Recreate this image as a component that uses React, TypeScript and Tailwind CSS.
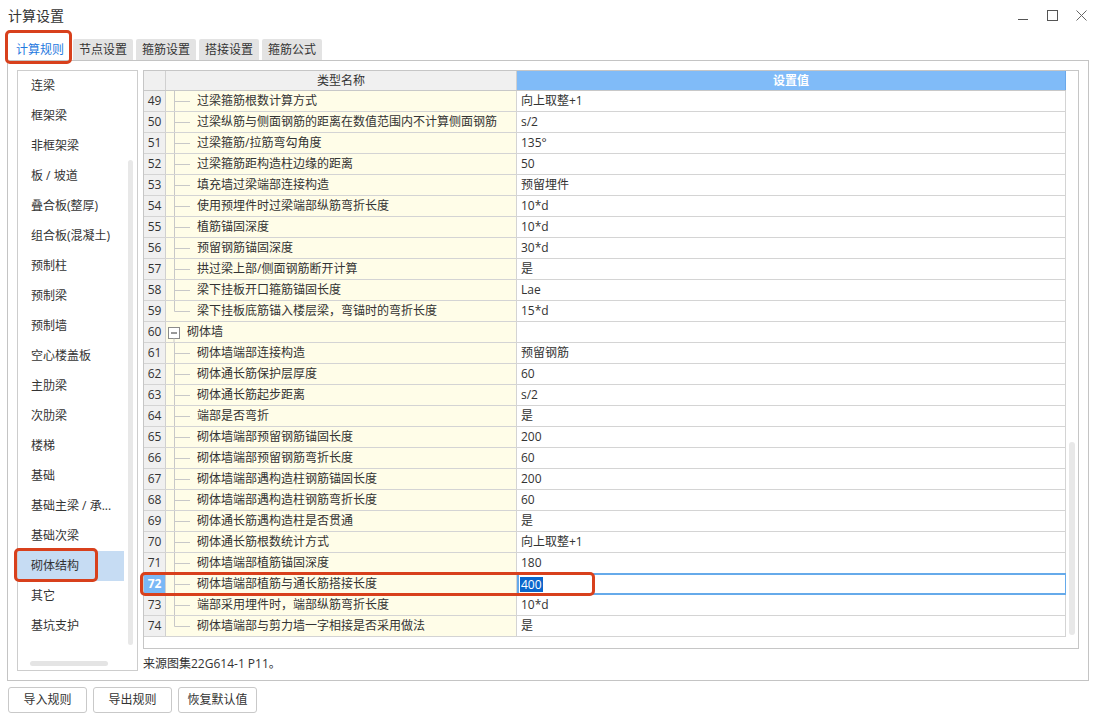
import React from "react";

type Row = { n: number; name: string; value: string; kind: "child" | "last" | "group" };

const rows: Row[] = [
  { n: 49, name: "过梁箍筋根数计算方式", value: "向上取整+1", kind: "child" },
  { n: 50, name: "过梁纵筋与侧面钢筋的距离在数值范围内不计算侧面钢筋", value: "s/2", kind: "child" },
  { n: 51, name: "过梁箍筋/拉筋弯勾角度", value: "135°", kind: "child" },
  { n: 52, name: "过梁箍筋距构造柱边缘的距离", value: "50", kind: "child" },
  { n: 53, name: "填充墙过梁端部连接构造", value: "预留埋件", kind: "child" },
  { n: 54, name: "使用预埋件时过梁端部纵筋弯折长度", value: "10*d", kind: "child" },
  { n: 55, name: "植筋锚固深度", value: "10*d", kind: "child" },
  { n: 56, name: "预留钢筋锚固深度", value: "30*d", kind: "child" },
  { n: 57, name: "拱过梁上部/侧面钢筋断开计算", value: "是", kind: "child" },
  { n: 58, name: "梁下挂板开口箍筋锚固长度", value: "Lae", kind: "child" },
  { n: 59, name: "梁下挂板底筋锚入楼层梁，弯锚时的弯折长度", value: "15*d", kind: "last" },
  { n: 60, name: "砌体墙", value: "", kind: "group" },
  { n: 61, name: "砌体墙端部连接构造", value: "预留钢筋", kind: "child" },
  { n: 62, name: "砌体通长筋保护层厚度", value: "60", kind: "child" },
  { n: 63, name: "砌体通长筋起步距离", value: "s/2", kind: "child" },
  { n: 64, name: "端部是否弯折", value: "是", kind: "child" },
  { n: 65, name: "砌体墙端部预留钢筋锚固长度", value: "200", kind: "child" },
  { n: 66, name: "砌体墙端部预留钢筋弯折长度", value: "60", kind: "child" },
  { n: 67, name: "砌体墙端部遇构造柱钢筋锚固长度", value: "200", kind: "child" },
  { n: 68, name: "砌体墙端部遇构造柱钢筋弯折长度", value: "60", kind: "child" },
  { n: 69, name: "砌体通长筋遇构造柱是否贯通", value: "是", kind: "child" },
  { n: 70, name: "砌体通长筋根数统计方式", value: "向上取整+1", kind: "child" },
  { n: 71, name: "砌体墙端部植筋锚固深度", value: "180", kind: "child" },
  { n: 72, name: "砌体墙端部植筋与通长筋搭接长度", value: "400", kind: "child" },
  { n: 73, name: "端部采用埋件时，端部纵筋弯折长度", value: "10*d", kind: "child" },
  { n: 74, name: "砌体墙端部与剪力墙一字相接是否采用做法", value: "是", kind: "last" },
];

const sideItems = [
  "连梁",
  "框架梁",
  "非框架梁",
  "板 / 坡道",
  "叠合板(整厚)",
  "组合板(混凝土)",
  "预制柱",
  "预制梁",
  "预制墙",
  "空心楼盖板",
  "主肋梁",
  "次肋梁",
  "楼梯",
  "基础",
  "基础主梁 / 承...",
  "基础次梁",
  "砌体结构",
  "其它",
  "基坑支护",
];

const tabs = ["计算规则", "节点设置", "箍筋设置", "搭接设置", "箍筋公式"];

function Tree({ kind }: { kind: Row["kind"] }) {
  if (kind === "group") {
    return (
      <svg width="20" height="20" className="shrink-0">
        <rect x="2.5" y="5.5" width="11" height="11" fill="#fff" stroke="#8a8a8a" />
        <line x1="5" y1="11" x2="11" y2="11" stroke="#333" />
        <line x1="8" y1="16.5" x2="8" y2="20" stroke="#c8c8c8" />
      </svg>
    );
  }
  return (
    <svg width="30" height="20" className="shrink-0">
      <line x1="8.5" y1="0" x2="8.5" y2={kind === "last" ? 10.5 : 20} stroke="#c8c8c8" />
      <line x1="8.5" y1="10.5" x2="24" y2="10.5" stroke="#c8c8c8" />
    </svg>
  );
}

function RedBox({ className }: { className: string }) {
  return <div className={"pointer-events-none absolute rounded-[5px] border-[3px] border-[#d8401c] " + className} />;
}

export default function App() {
  return (
    <div className="relative h-[717px] w-[1095px] overflow-hidden bg-white font-['Open_Sans','Noto_Sans_CJK_SC',sans-serif] text-[12px] leading-[20px] text-[#333]">
      {/* title bar */}
      <div className="flex h-[31px] items-center justify-between pl-[8px] pr-[8px]">
        <div className="text-[14px] leading-[20px] text-[#333]">计算设置</div>
        <div className="flex items-center gap-[18px] pr-[0px]">
          <svg width="11" height="11" viewBox="0 0 11 11">
            <line x1="0" y1="9.5" x2="10" y2="9.5" stroke="#555" />
          </svg>
          <svg width="11" height="11" viewBox="0 0 11 11">
            <rect x="0.5" y="0.5" width="10" height="10" fill="none" stroke="#555" />
          </svg>
          <svg width="11" height="11" viewBox="0 0 11 11">
            <line x1="0.5" y1="0.5" x2="10.5" y2="10.5" stroke="#666" />
            <line x1="10.5" y1="0.5" x2="0.5" y2="10.5" stroke="#666" />
          </svg>
        </div>
      </div>

      {/* tabs */}
      <div className="flex h-[29px] items-end gap-[3px] pl-[10px]">
        {tabs.map((t, i) => (
          <div
            key={t}
            className={
              "flex h-[21px] items-center justify-center rounded-t-[2px] text-[12px] " +
              (i === 0 ? "w-[60px] bg-white text-[#1f7ae0]" : "w-[60px] bg-[#e3e3e3] text-[#333]")
            }
          >
            {t}
          </div>
        ))}
      </div>

      {/* main panel */}
      <div className="ml-[7px] h-[621px] w-[1082px] border border-[#c4c4c4] pl-[9px] pt-[9px]">
        <div className="flex gap-[5px]">
          {/* side list */}
          <div className="flex h-[601px] w-[121px] flex-col border border-[#cdcdcd]">
            <div className="flex h-[580px]">
              <div className="flex w-[106px] flex-col">
                {sideItems.map((s) => (
                  <div
                    key={s}
                    className={
                      "flex h-[30px] shrink-0 items-center whitespace-nowrap pl-[13px] " +
                      (s === "砌体结构" ? "bg-[#c6dcf3]" : "")
                    }
                  >
                    {s}
                  </div>
                ))}
              </div>
              <div className="pl-[4px] pt-[89px]">
                <div className="h-[485px] w-[5px] rounded-[3px] bg-[#e8e8e8]" />
              </div>
            </div>
            <div className="pl-[12px] pt-[10px]">
              <div className="h-[5px] w-[78px] rounded-[3px] bg-[#e4e4e4]" />
            </div>
          </div>

          {/* grid + source */}
          <div className="flex flex-col">
            <div className="flex h-[579px] w-[936px] border border-[#c6c6c6]">
              <div className="flex w-[922px] flex-col">
                {/* header */}
                <div className="flex h-[20px] shrink-0 border-b border-[#c8c8c8]">
                  <div className="w-[22px] border-r border-[#d0d0d0] bg-[#f0f0f0]" />
                  <div className="flex w-[351px] items-center justify-center border-r border-[#d0d0d0] bg-[#f0f0f0] leading-[19px]">
                    类型名称
                  </div>
                  <div className="flex flex-1 items-center justify-center border-r border-[#6aa8ea] bg-[#80bbf8] font-bold leading-[19px] text-white">
                    设置值
                  </div>
                </div>
                {rows.map((r) => {
                  const sel = r.n === 72;
                  return (
                    <div key={r.n} className="flex h-[21px] shrink-0 border-b border-[#d4d4d4]">
                      <div
                        className={
                          "flex w-[22px] items-center justify-center border-r border-[#d0d0d0] " +
                          (sel ? "bg-[#7ab8f6] font-bold text-white" : "bg-[#f0f0f0]")
                        }
                      >
                        {r.n}
                      </div>
                      <div className="flex w-[351px] items-center whitespace-nowrap border-r border-[#d4d4d4] bg-[#fffde8]">
                        <Tree kind={r.kind} />
                        <span className={r.kind === "group" ? "pl-[1px]" : "pl-[1px]"}>{r.name}</span>
                      </div>
                      <div
                        className={
                          "flex flex-1 items-center border-r " +
                          (sel
                            ? "-mt-[1px] h-[22px] border-[2px] border-[#66aaea] bg-white pl-[1px]"
                            : "border-[#d4d4d4] bg-white pl-[4px]")
                        }
                      >
                        {sel ? (
                          <span className="bg-[#0b66cc] px-[1px] leading-[15px] text-white">{r.value}</span>
                        ) : (
                          r.value
                        )}
                      </div>
                    </div>
                  );
                })}
              </div>
              <div className="pl-[3px] pt-[371px]">
                <div className="h-[193px] w-[6px] rounded-[3px] bg-[#e8e8e8]" />
              </div>
            </div>
            <div className="pt-[5px] leading-[20px]">来源图集22G614-1 P11。</div>
          </div>
        </div>
      </div>

      {/* buttons */}
      <div className="flex gap-[6px] pl-[8px] pt-[6px]">
        {["导入规则", "导出规则", "恢复默认值"].map((b) => (
          <div
            key={b}
            className="flex h-[26px] w-[79px] items-center justify-center rounded-[3px] border border-[#c9c9c9] bg-white text-[12px]"
          >
            {b}
          </div>
        ))}
      </div>

      {/* red highlight overlays */}
      <RedBox className="left-[5px] top-[30px] h-[34px] w-[67px]" />
      <RedBox className="left-[14px] top-[548px] h-[34px] w-[84px]" />
      <RedBox className="left-[140px] top-[572px] h-[24px] w-[455px]" />
    </div>
  );
}
